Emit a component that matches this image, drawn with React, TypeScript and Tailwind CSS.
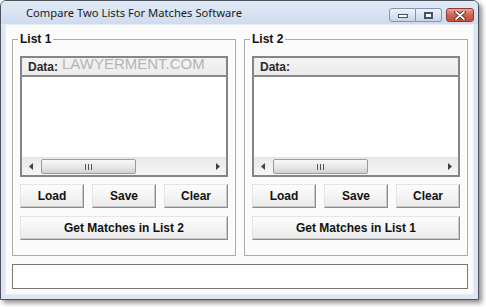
import React from 'react';

const ui = { fontFamily: '"Liberation Sans", Arial, sans-serif' };

// Classic 3D push button
const PushButton: React.FC<{ label: string; className?: string }> = ({ label, className = '' }) => (
  <button
    className={`h-[24px] flex items-center justify-center border border-t-[#e6e6e6] border-l-[#e6e6e6] border-r-[#8d8d8d] border-b-[#8d8d8d] bg-linear-to-b from-[#fdfdfd] to-[#ebebeb] shadow-[inset_-1px_-1px_0_#c9c9c9] text-[12px] font-bold text-[#111] ${className}`}
    style={ui}
  >
    {label}
  </button>
);

const HScrollBar: React.FC = () => (
  <div className="h-[18px] flex items-center bg-linear-to-b from-[#e9e9e9] to-[#f6f6f6] border-t border-[#e2e2e2]">
    <div className="w-[18px] h-full flex items-center justify-center">
      <svg width="5" height="7" viewBox="0 0 5 7">
        <path d="M4 0 L0 3.5 L4 7 Z" fill="#404040" />
      </svg>
    </div>
    <div className="ml-[1px] w-[95px] h-[15px] rounded-[2px] border border-[#9c9c9c] bg-linear-to-b from-[#f7f7f7] via-[#e8e8e8] to-[#d3d3d3] flex items-center justify-center gap-[2px]">
      <span className="w-[1px] h-[6px] bg-[#555]" />
      <span className="w-[1px] h-[6px] bg-[#555]" />
      <span className="w-[1px] h-[6px] bg-[#555]" />
    </div>
    <div className="flex-1" />
    <div className="w-[18px] h-full flex items-center justify-center">
      <svg width="5" height="7" viewBox="0 0 5 7">
        <path d="M1 0 L5 3.5 L1 7 Z" fill="#404040" />
      </svg>
    </div>
  </div>
);

const ListGroup: React.FC<{ title: string; other: string; watermark?: boolean }> = ({ title, other, watermark }) => (
  <fieldset className="w-[224px] border border-[#ababab] px-[7px] pt-[10px] pb-[15px]">
    <legend className="ml-[-2px] px-[2px] text-[12px] leading-[14px] font-bold text-[#111]" style={ui}>
      {title}
    </legend>
    <div className="h-[121px] flex flex-col border-2 border-[#858585] bg-white">
      <div className="relative h-[19px] flex items-center bg-linear-to-b from-[#f3f3f3] to-[#ececec] border-b-2 border-[#8a8a8a] pl-[6px]">
        <span className="text-[12px] font-bold text-[#2a2a2a]" style={ui}>Data:</span>
        {watermark && (
          <span
            className="absolute left-[40px] top-[-3px] text-[15px] leading-[18px] text-[#b4b4b4] pointer-events-none"
            style={ui}
          >
            LAWYERMENT.COM
          </span>
        )}
      </div>
      <div className="flex-1" />
      <HScrollBar />
    </div>
    <div className="mt-[7px] flex gap-[8px]">
      <PushButton label="Load" className="w-[64px]" />
      <PushButton label="Save" className="w-[64px]" />
      <PushButton label="Clear" className="w-[64px]" />
    </div>
    <PushButton label={`Get Matches in ${other}`} className="mt-[8px] w-[208px]" />
  </fieldset>
);

const CaptionButtons: React.FC = () => (
  <div className="flex items-start gap-[4px] pt-[7px] pr-[4px]">
    <div className="flex">
      <div className="w-[27px] h-[14px] rounded-l-[3px] border border-[#8494ad] bg-linear-to-b from-[#eef3fa] to-[#c8d6ea] flex items-end justify-center pb-[3px]">
        <span className="w-[10px] h-[4px] bg-white border border-[#46546a]" />
      </div>
      <div className="w-[26px] h-[14px] rounded-r-[3px] border border-l-0 border-[#8494ad] bg-linear-to-b from-[#eef3fa] to-[#c8d6ea] flex items-center justify-center">
        <span className="w-[9px] h-[7px] border-2 border-[#46546a] bg-white" />
      </div>
    </div>
    <div className="w-[28px] h-[14px] rounded-[3px] border border-[#8b3a33] bg-linear-to-b from-[#eaa899] via-[#cf6150] to-[#c44e3c] flex items-center justify-center">
      <svg width="12" height="9" viewBox="0 0 12 9">
        <path d="M2 1 L10 8 M10 1 L2 8" stroke="#3b1a14" strokeWidth="3.4" strokeLinecap="round" />
        <path d="M2 1 L10 8 M10 1 L2 8" stroke="#ffffff" strokeWidth="1.8" strokeLinecap="round" />
      </svg>
    </div>
  </div>
);

export default function App() {
  return (
    <div className="w-[486px] h-[307px] bg-white">
      <div className="w-[479px] h-[300px] flex flex-col border border-[#4b525c] rounded-t-[6px] bg-[#dde7f4] shadow-[3px_3px_5px_rgba(0,0,0,0.45)] overflow-hidden">
        {/* title bar */}
        <div className="h-[23px] flex justify-between bg-linear-to-b from-[#e1eaf6] to-[#cfdcee]">
          <div
            className="pl-[25px] pt-[4px] text-[11.2px] leading-[16px] text-[#1b1b1b]"
            style={{ fontFamily: '"Noto Sans", "Open Sans", sans-serif' }}
          >
            Compare Two Lists For Matches Software
          </div>
          <CaptionButtons />
        </div>

        {/* client area */}
        <div className="flex-1 mx-[4px] mb-[4px] bg-[#fbfbfb] border border-[#e9eef5] pl-[6px] pr-[5px] pt-[7px] flex flex-col">
          <div className="flex gap-[8px]">
            <ListGroup title="List 1" other="List 2" watermark />
            <ListGroup title="List 2" other="List 1" />
          </div>
          <div className="mt-[8px] h-[25px] w-[456px] border border-[#777] bg-white" />
        </div>
      </div>
    </div>
  );
}
